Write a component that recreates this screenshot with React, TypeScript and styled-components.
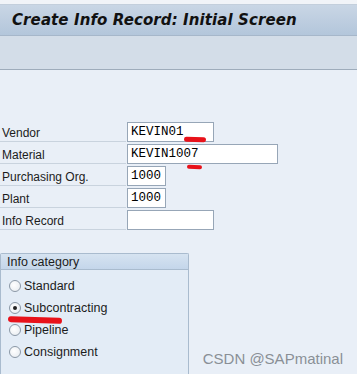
import React from 'react';
import styled, { createGlobalStyle } from 'styled-components';

const GlobalStyle = createGlobalStyle`
  html, body {
    margin: 0;
    padding: 0;
    background: #e9eff7;
  }
  body {
    font-family: Tahoma, "DejaVu Sans", "Liberation Sans", sans-serif;
  }
`;

const Screen = styled.div`
  position: relative;
  width: 357px;
  height: 374px;
  overflow: hidden;
  background: #e9eff7;
  display: flex;
  flex-direction: column;
`;

const TopStrip = styled.div`
  height: 4px;
  background: #f1f4f8;
  border-bottom: 1px solid #c3cfdc;
`;

const TitleBar = styled.div`
  height: 30px;
  display: flex;
  align-items: center;
  padding-left: 12px;
  background: linear-gradient(#c9d6e5, #b3c6db);
  border-bottom: 1px solid #a6b7ca;
  h1 {
    margin: 0;
    font-family: "DejaVu Sans", Verdana, sans-serif;
    font-size: 15px;
    font-weight: bold;
    font-style: italic;
    color: #111;
    letter-spacing: 0.1px;
  }
`;

const Toolbar = styled.div`
  height: 33px;
  background: #d3dde8;
  border-bottom: 1px solid #9eacbb;
`;

const Form = styled.div`
  margin-top: 52px;
  display: flex;
  flex-direction: column;
  gap: 2px;
`;

const Row = styled.div`
  display: flex;
  align-items: stretch;
  height: 20px;
`;

const Label = styled.div`
  width: 124px;
  padding-left: 2px;
  border-bottom: 1px solid #c9d3de;
  display: flex;
  align-items: center;
  font-family: "Liberation Sans", Arial, sans-serif;
  font-size: 12px;
  color: #1c1c1c;
  padding-top: 2px;
`;

const Field = styled.div<{ $w: number }>`
  position: relative;
  box-sizing: border-box;
  width: ${(p) => p.$w}px;
  height: 20px;
  margin-left: 1px;
  background: #fff;
  border: 1px solid #97a6b7;
  padding-left: 3px;
  display: flex;
  align-items: center;
  font-family: "Liberation Mono", "Courier New", monospace;
  font-size: 12.5px;
  color: #000;
`;

const Scribble = styled.span<{ $l: number; $t: number; $w: number; $h: number }>`
  position: absolute;
  left: ${(p) => p.$l}px;
  top: ${(p) => p.$t}px;
  width: ${(p) => p.$w}px;
  height: ${(p) => p.$h}px;
  border-radius: 4px;
  background: #e8121a;
  transform: rotate(2deg);
`;

const Group = styled.div`
  margin-top: 23px;
  width: 187px;
  flex: 1;
  border: 1px solid #a9bbce;
  border-bottom: none;
  border-radius: 2px 2px 0 0;
  background: #e3ecf6;
`;

const GroupHead = styled.div`
  height: 15px;
  padding-left: 6px;
  background: linear-gradient(#d6e3f1, #c4d6ea);
  border-bottom: 1px solid #a9bbce;
  display: flex;
  align-items: center;
  font-family: "Liberation Sans", Arial, sans-serif;
  font-size: 12.5px;
  color: #1c1c1c;
`;

const Options = styled.div`
  padding-top: 8px;
  display: flex;
  flex-direction: column;
  gap: 6px;
`;

const Option = styled.div`
  position: relative;
  height: 16px;
  display: flex;
  align-items: center;
  padding-left: 8px;
  gap: 3px;
  font-family: "Liberation Sans", Arial, sans-serif;
  font-size: 12.5px;
  color: #1c1c1c;
`;

const Radio = styled.span<{ $on?: boolean }>`
  box-sizing: border-box;
  width: 12px;
  height: 12px;
  border-radius: 50%;
  border: 1px solid #8b98a6;
  background: radial-gradient(circle at 40% 40%, #ffffff, #e4e9ee);
  display: flex;
  align-items: center;
  justify-content: center;
  &::after {
    content: '';
    display: ${(p) => (p.$on ? 'block' : 'none')};
    width: 4px;
    height: 4px;
    border-radius: 50%;
    background: #222;
  }
`;

const Watermark = styled.div`
  position: absolute;
  right: 14px;
  bottom: 7px;
  font-family: "Liberation Sans", Arial, sans-serif;
  font-size: 15px;
  color: #8a8f96;
`;

const fields = [
  { label: 'Vendor', value: 'KEVIN01', w: 87 },
  { label: 'Material', value: 'KEVIN1007', w: 151 },
  { label: 'Purchasing Org.', value: '1000', w: 39 },
  { label: 'Plant', value: '1000', w: 39 },
  { label: 'Info Record', value: '', w: 87 },
];

const categories = ['Standard', 'Subcontracting', 'Pipeline', 'Consignment'];

export default function App() {
  return (
    <Screen>
      <GlobalStyle />
      <TopStrip />
      <TitleBar>
        <h1>Create Info Record: Initial Screen</h1>
      </TitleBar>
      <Toolbar />
      <Form>
        {fields.map((f, i) => (
          <Row key={f.label}>
            <Label>{f.label}</Label>
            <Field $w={f.w}>
              {f.value}
              {i === 0 && <Scribble $l={56} $t={14} $w={22} $h={5} />}
              {i === 1 && <Scribble $l={59} $t={20} $w={15} $h={4} />}
            </Field>
          </Row>
        ))}
      </Form>
      <Group>
        <GroupHead>Info category</GroupHead>
        <Options>
          {categories.map((c, i) => (
            <Option key={c}>
              <Radio $on={i === 1} />
              {c}
              {i === 1 && <Scribble $l={7} $t={17} $w={54} $h={6} />}
            </Option>
          ))}
        </Options>
      </Group>
      <Watermark>CSDN @SAPmatinal</Watermark>
    </Screen>
  );
}
